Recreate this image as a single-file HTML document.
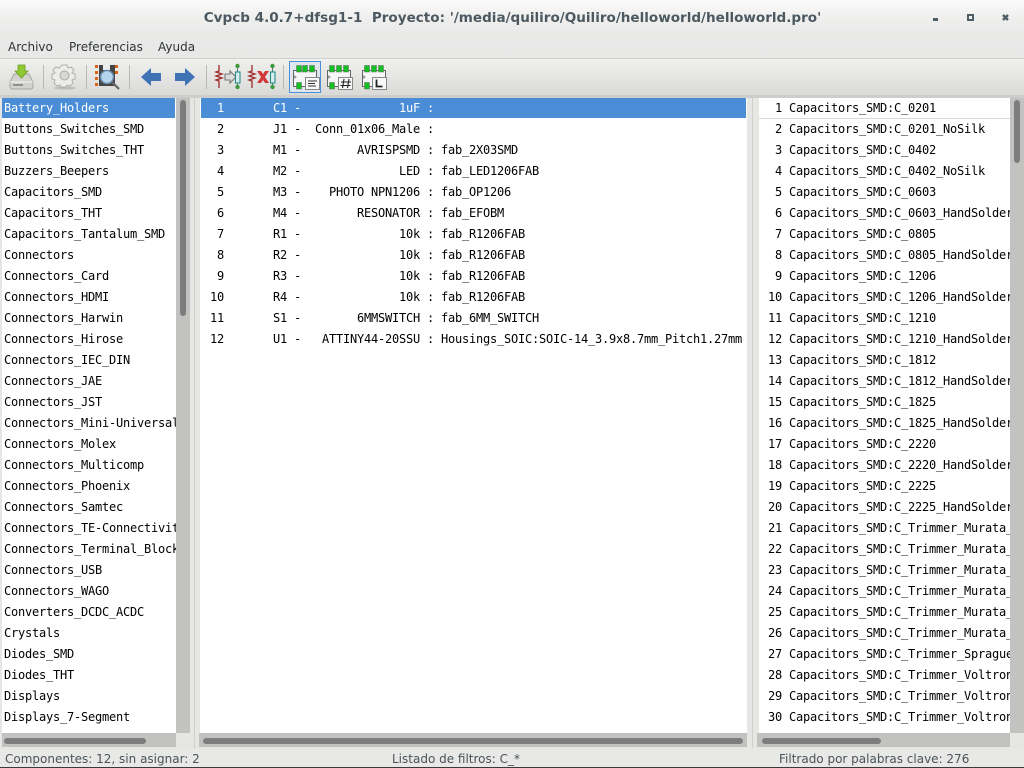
<!DOCTYPE html>
<html><head><meta charset="utf-8"><title>Cvpcb</title>
<style>
html,body{margin:0;padding:0;width:1024px;height:768px;overflow:hidden;background:#e8e8e7}
*{box-sizing:border-box}
.a{position:absolute}
#top{left:0;top:0;width:1024px;height:58px;background:linear-gradient(#fbfbfb 0,#efefee 18px,#e9e9e8 36px,#e8e8e7 100%)}
#title{left:0;top:10px;width:1024px;padding-left:1px;text-align:center;font:bold 13.55px/17px "DejaVu Sans",sans-serif;color:#4c5961;white-space:pre}
.m{top:39px;font:12px/16px "DejaVu Sans",sans-serif;color:#2e3436}
#tb{left:0;top:58px;width:1024px;height:38px;background:linear-gradient(#f0f0ef,#d9d9d7);border-top:1px solid #cfcfcd}
.sep{top:65px;width:1px;height:24px;background:#b8b8b6}
#back{left:0;top:96px;width:1024px;height:653px;background:#e6e6e5}
.list{background:#fff;overflow:hidden;top:97px;height:636px}
pre{margin:0;font:12px/21px "DejaVu Sans Mono",monospace;letter-spacing:-.224px;color:#000;white-space:pre;height:634px;overflow:hidden}
.sb{background:#c2c2c0}
.th{background:#7c7e7e;border-radius:3px}
.sel{background:#4a8cd6;height:21px;top:0}
.st{top:751px;font:12px/16px "DejaVu Sans",sans-serif;color:#4a5359;white-space:pre}
svg{position:absolute;overflow:visible}
</style></head><body>
<div class="a" id="top"></div>
<div class="a" id="title">Cvpcb 4.0.7+dfsg1-1  Proyecto: '/media/quiliro/Quiliro/helloworld/helloworld.pro'</div>
<svg style="left:900px;top:0" width="124" height="40"><rect x="33" y="18" width="5" height="3" fill="#4f5d65"/><rect x="68" y="15" width="5" height="5" fill="none" stroke="#4f5d65" stroke-width="2"/><path d="M103 15l5 5M108 15l-5 5" stroke="#4f5d65" stroke-width="2.4" fill="none"/></svg>
<div class="a m" style="left:8px">Archivo</div>
<div class="a m" style="left:69px">Preferencias</div>
<div class="a m" style="left:158px">Ayuda</div>
<div class="a" id="tb"></div>
<div class="a sep" style="left:43px"></div><div class="a sep" style="left:86px"></div><div class="a sep" style="left:129px"></div><div class="a sep" style="left:206px"></div><div class="a sep" style="left:283px"></div>
<div class="a" style="left:289px;top:61px;width:32px;height:32px;border:1px solid #4a90d9;background:#dfe6ee"></div>
<svg style="left:0;top:58px" width="400" height="38">
<path d="M14 16h15l4 8v5a2 2 0 0 1-2 2H12a2 2 0 0 1-2-2v-5z" fill="#d2d2ce" stroke="#a5a5a1"/><path d="M10 24h23" stroke="#f4f4f2"/><rect x="13" y="26" width="10" height="2" fill="#8f8f8b"/>
<path d="M18 7h7v6h3l-6.500 7-6.500-7h3z" fill="#8fc832" stroke="#6c9e22" stroke-width=".8"/>
<ellipse cx="65" cy="30" rx="11" ry="1.600" fill="#bdbdbb"/><path d="M62 7h5l1 3 3-1 3 3-2 3 3 1v5l-3 1 1 3-3 3-3-1-1 2h-5l-1-2-3 1-3-3 1-3-3-1v-5l3-1-2-3 3-3 3 1z" fill="#ececea" stroke="#b0b0ae"/><circle cx="64.500" cy="17.500" r="4.500" fill="#d8d8d6" stroke="#a8a8a6"/>
<rect x="99" y="7" width="16" height="21" fill="#444"/><rect x="103" y="7" width="7" height="5" fill="#eee"/>
<g fill="#d8641a"><rect x="95" y="7" width="3" height="3"/><rect x="95" y="13" width="3" height="3"/><rect x="95" y="19" width="3" height="3"/><rect x="95" y="25" width="3" height="3"/><rect x="115" y="7" width="3" height="3"/><rect x="115" y="13" width="3" height="3"/></g>
<circle cx="107" cy="19" r="6.500" fill="#b5d4ee" stroke="#6688a6" stroke-width="1.500"/><path d="M112 24l7 7" stroke="#666" stroke-width="2.200"/>
<path d="M141 19l10-9v5h10v8h-10v5z" fill="#3f74b4"/><path d="M175 15h10v-5l10 9-10 9v-5h-10z" fill="#3f74b4"/>
<g fill="none" stroke="#9c2a2a" stroke-width="1.300"><path d="M219 7v6l-3 1 6 2-6 2 6 2-6 2 3 1v7"/><path d="M252 7v6l-3 1 6 2-6 2 6 2-6 2 3 1v7"/></g>
<path d="M225 16h5v-3l6 6-6 6v-3h-5z" fill="#ddd" stroke="#777" stroke-width="1.100"/>
<path d="M257 13h4l2 3 2-3h4l-4 6 4 6h-4l-2-3-2 3h-4l4-6z" fill="#d23a3a"/>
<g><path d="M237.500 8v6M237.500 25v4M272.500 8v6M272.500 25v4" stroke="#4f7a7a"/><rect x="235.500" y="14" width="4.500" height="11" fill="#d8eeee" stroke="#2a8a8a" stroke-width="1.100"/><rect x="270.500" y="14" width="4.500" height="11" fill="#d8eeee" stroke="#2a8a8a" stroke-width="1.100"/><g fill="#3f9a3f"><circle cx="237.500" cy="8" r="2.200"/><circle cx="237.500" cy="29" r="2.200"/><circle cx="272.500" cy="8" r="2.200"/><circle cx="272.500" cy="29" r="2.200"/></g></g>
<g><rect x="293.500" y="12.500" width="23" height="16" fill="#f6f6f6" stroke="#666"/><path d="M294 17l3 2-3 2z" fill="#999"/><g fill="#12c020" stroke="#666" stroke-width=".5"><rect x="296.500" y="7.500" width="5" height="6.500"/><rect x="302.500" y="7.500" width="5" height="6.500"/><rect x="309.500" y="7.500" width="5" height="6.500"/><rect x="296.500" y="24.500" width="5" height="6.500"/></g><rect x="305.500" y="19.500" width="14" height="12" fill="#f8f8f8" stroke="#888"/><path d="M308 23h9M308 25.500h7M308 28h8" stroke="#333"/></g>
<g><rect x="327.500" y="12.500" width="23" height="16" fill="#f6f6f6" stroke="#666"/><path d="M328 17l3 2-3 2z" fill="#999"/><g fill="#12c020" stroke="#666" stroke-width=".5"><rect x="329.500" y="7.500" width="5" height="6.500"/><rect x="336.500" y="7.500" width="5" height="6.500"/><rect x="343.500" y="7.500" width="5" height="6.500"/><rect x="329.500" y="24.500" width="5" height="6.500"/></g><rect x="338.500" y="19.500" width="14" height="12" fill="#f8f8f8" stroke="#888"/><path d="M344 21l-1.500 9M349 21l-1.500 9M341 24h10M340.500 27.500h10" stroke="#222" stroke-width="1.100"/></g>
<g><rect x="362.500" y="12.500" width="23" height="16" fill="#f6f6f6" stroke="#666"/><path d="M363 17l3 2-3 2z" fill="#999"/><g fill="#12c020" stroke="#666" stroke-width=".5"><rect x="364.500" y="7.500" width="5" height="6.500"/><rect x="371.500" y="7.500" width="5" height="6.500"/><rect x="378.500" y="7.500" width="5" height="6.500"/><rect x="364.500" y="24.500" width="5" height="6.500"/></g><rect x="372.500" y="19.500" width="14" height="12" fill="#f8f8f8" stroke="#888"/><path d="M376.500 21.500v7h6" fill="none" stroke="#222" stroke-width="1.800"/></g>
</svg>
<div class="a" id="back"></div>

<div class="a sb" style="left:176px;top:97px;width:14px;height:636px"></div>
<div class="a th" style="left:180px;top:100px;width:6px;height:216px"></div>
<div class="a sb" style="left:2px;top:733px;width:174px;height:14px"></div>
<div class="a th" style="left:4px;top:738px;width:142px;height:6px"></div>
<div class="a" style="left:176px;top:733px;width:14px;height:14px;background:#e6e6e5"></div>
<div class="a" style="left:194px;top:96px;width:1px;height:652px;background:#cfcfcd"></div>

<div class="a list" style="left:2px;width:174px">
<div class="a sel" style="left:0;width:173px"></div>
<pre class="a" style="left:2px;top:1px"><span style="color:#fff">Battery_Holders</span>
Buttons_Switches_SMD
Buttons_Switches_THT
Buzzers_Beepers
Capacitors_SMD
Capacitors_THT
Capacitors_Tantalum_SMD
Connectors
Connectors_Card
Connectors_HDMI
Connectors_Harwin
Connectors_Hirose
Connectors_IEC_DIN
Connectors_JAE
Connectors_JST
Connectors_Mini-Universal
Connectors_Molex
Connectors_Multicomp
Connectors_Phoenix
Connectors_Samtec
Connectors_TE-Connectivity
Connectors_Terminal_Blocks
Connectors_USB
Connectors_WAGO
Converters_DCDC_ACDC
Crystals
Diodes_SMD
Diodes_THT
Displays
Displays_7-Segment
Fiducials</pre>
</div>

<div class="a sb" style="left:199px;top:733px;width:548px;height:14px"></div>
<div class="a th" style="left:203px;top:738px;width:540px;height:6px"></div>
<div class="a list" style="left:200px;width:547px">
<div class="a sel" style="left:1px;width:545px"></div>
<pre class="a" style="left:3px;top:1px"><span style="color:#fff">  1       C1 -              1uF :</span>
  2       J1 -  Conn_01x06_Male :
  3       M1 -        AVRISPSMD : fab_2X03SMD
  4       M2 -              LED : fab_LED1206FAB
  5       M3 -    PHOTO NPN1206 : fab_OP1206
  6       M4 -        RESONATOR : fab_EFOBM
  7       R1 -              10k : fab_R1206FAB
  8       R2 -              10k : fab_R1206FAB
  9       R3 -              10k : fab_R1206FAB
 10       R4 -              10k : fab_R1206FAB
 11       S1 -        6MMSWITCH : fab_6MM_SWITCH
 12       U1 -   ATTINY44-20SSU : Housings_SOIC:SOIC-14_3.9x8.7mm_Pitch1.27mm</pre>
</div>

<div class="a" style="left:752px;top:96px;width:1px;height:652px;background:#cfcfcd"></div>
<div class="a sb" style="left:757px;top:733px;width:253px;height:14px"></div>
<div class="a th" style="left:762px;top:738px;width:119px;height:6px"></div>
<div class="a sb" style="left:1010px;top:97px;width:14px;height:636px"></div>
<div class="a th" style="left:1014px;top:100px;width:6px;height:63px"></div>
<div class="a" style="left:1010px;top:733px;width:14px;height:14px;background:#e6e6e5"></div>
<div class="a list" style="left:759px;width:251px">
<div class="a" style="left:0;top:21px;width:251px;height:1px;background:#d8d8d8"></div>
<pre class="a" style="left:2px;top:1px">  1 Capacitors_SMD:C_0201
  2 Capacitors_SMD:C_0201_NoSilk
  3 Capacitors_SMD:C_0402
  4 Capacitors_SMD:C_0402_NoSilk
  5 Capacitors_SMD:C_0603
  6 Capacitors_SMD:C_0603_HandSoldering
  7 Capacitors_SMD:C_0805
  8 Capacitors_SMD:C_0805_HandSoldering
  9 Capacitors_SMD:C_1206
 10 Capacitors_SMD:C_1206_HandSoldering
 11 Capacitors_SMD:C_1210
 12 Capacitors_SMD:C_1210_HandSoldering
 13 Capacitors_SMD:C_1812
 14 Capacitors_SMD:C_1812_HandSoldering
 15 Capacitors_SMD:C_1825
 16 Capacitors_SMD:C_1825_HandSoldering
 17 Capacitors_SMD:C_2220
 18 Capacitors_SMD:C_2220_HandSoldering
 19 Capacitors_SMD:C_2225
 20 Capacitors_SMD:C_2225_HandSoldering
 21 Capacitors_SMD:C_Trimmer_Murata_TZB4-A
 22 Capacitors_SMD:C_Trimmer_Murata_TZB4-B
 23 Capacitors_SMD:C_Trimmer_Murata_TZC3
 24 Capacitors_SMD:C_Trimmer_Murata_TZR1
 25 Capacitors_SMD:C_Trimmer_Murata_TZS1
 26 Capacitors_SMD:C_Trimmer_Murata_TZV2
 27 Capacitors_SMD:C_Trimmer_Sprague-Goodman
 28 Capacitors_SMD:C_Trimmer_Voltronics_JN
 29 Capacitors_SMD:C_Trimmer_Voltronics_JQ
 30 Capacitors_SMD:C_Trimmer_Voltronics_JR
 31 Capacitors_SMD:C_Trimmer_Voltronics_JV</pre>
</div>
<div class="a" style="left:0;top:95px;width:1024px;height:3px;background:#cdcdcb"></div>

<div class="a st" style="left:5px">Componentes: 12, sin asignar: 2</div>
<div class="a st" style="left:392px">Listado de filtros: C_*</div>
<div class="a st" style="left:779px">Filtrado por palabras clave: 276</div>
<div class="a" style="left:0;top:767px;width:1024px;height:1px;background:#3a3a3a"></div>
</body></html>
